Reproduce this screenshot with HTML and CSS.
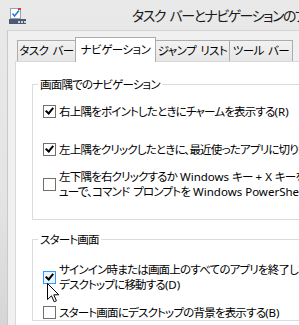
FILE: index.html
```html
<html>
<head>
  <title>タスク バーとナビゲーションのプロパティ</title>
  <link rel="stylesheet" href="styles.css">
</head>
<body>
  <div class="window">
    <div class="titlebar">
      <svg class="app-icon" width="17" height="16" viewBox="0 0 17 16">
        <rect x="1.5" y="0.5" width="10" height="10" fill="#ffffff" stroke="#9aa3ad"/>
        <rect x="9" y="0" width="3" height="2" fill="#d83b3b"/>
        <path d="M3.5 5.5 L5.5 8 L10 2.5" fill="none" stroke="#2a7fd4" stroke-width="1.6"/>
        <rect x="0" y="11" width="17" height="5" fill="#4b5a70"/>
        <rect x="9" y="13" width="2" height="2" fill="#c8d0da"/>
        <rect x="12" y="13" width="2" height="2" fill="#c8d0da"/>
        <rect x="15" y="13" width="2" height="2" fill="#c8d0da"/>
      </svg>
      <span class="title">タスク バーとナビゲーションのプロパティ</span>
    </div>

    <div class="client">
      <div class="tabs">
        <div class="tab tab-taskbar">タスク バー</div>
        <div class="tab tab-nav selected">ナビゲーション</div>
        <div class="tab tab-jump">ジャンプ リスト</div>
        <div class="tab tab-toolbar">ツール バー</div>
      </div>

      <div class="panel">
        <div class="group corners">
          <div class="group-title">画面隅でのナビゲーション</div>
          <div class="option opt-charms">
            <span class="check on"></span>
            <span class="label">右上隅をポイントしたときにチャームを表示する<span class="en">(R)</span></span>
          </div>
          <div class="option opt-switch">
            <span class="check on"></span>
            <span class="label">左上隅をクリックしたときに、最近使ったアプリに切り替える<span class="en">(T)</span></span>
          </div>
          <div class="option opt-powershell">
            <span class="check"></span>
            <span class="label">左下隅を右クリックするか<span class="en"> Windows </span>キー<span class="en"> + X </span>キーを押したときに表示されるメニ<br>ューで、コマンド プロンプトを<span class="en"> Windows PowerShell </span>に置き換える<span class="en">(C)</span></span>
          </div>
        </div>

        <div class="group start">
          <div class="group-title">スタート画面</div>
          <div class="option opt-desktop">
            <span class="check on focus"></span>
            <span class="label">サインイン時または画面上のすべてのアプリを終了したときに、スタート画面ではなく<br>デスクトップに移動する<span class="en">(D)</span></span>
          </div>
          <div class="option opt-background">
            <span class="check"></span>
            <span class="label">スタート画面にデスクトップの背景を表示する<span class="en">(B)</span></span>
          </div>
        </div>
      </div>
    </div>

    <svg class="cursor" width="13" height="20" viewBox="0 0 13 20">
      <path d="M0.5 0.5 L0.5 16.5 L4.5 12.8 L7.2 18.8 L9.4 17.8 L6.8 11.8 L11.8 11.8 Z" fill="#ffffff" stroke="#000000" stroke-width="1" stroke-linejoin="miter"/>
    </svg>
  </div>
</body>
</html>
```

FILE: styles.css
```css
body {
  margin: 0;
  padding: 0;
  width: 299px;
  height: 325px;
  overflow: hidden;
  background: #e8e8e8;
  font-family: "Noto Sans CJK JP", "Noto Sans", sans-serif;
  font-size: 11.5px;
  letter-spacing: -0.8px;
  word-spacing: 2px;
  font-feature-settings: "palt";
  color: #000000;
}

.en {
  font-family: "Noto Sans", "Noto Sans CJK JP", sans-serif;
  letter-spacing: 0;
  word-spacing: 0;
  white-space: pre;
}

.window {
  position: relative;
  width: 460px;
  height: 325px;
  background: linear-gradient(to bottom, #e9e9e9 0%, #e4e4e4 60%, #d6d6d6 100%);
}

/* title bar */
.titlebar {
  height: 30px;
  display: flex;
  align-items: center;
  padding-left: 9px;
}

.app-icon {
  margin-top: 1px;
}

.title {
  margin-left: 106px;
  font-size: 14px;
  letter-spacing: -1.5px;
  word-spacing: 3px;
  color: #1a1a1a;
  white-space: nowrap;
}

/* dialog area */
.client {
  margin-left: 7px;
  height: 295px;
  border-left: 1px solid #c9c9c9;
  border-top: 1px solid #d4d4d4;
  background: #f0f0f0;
  padding-left: 7px;
}

.tabs {
  display: flex;
  align-items: flex-end;
  height: 24px;
  padding-top: 6px;
  padding-left: 2px;
}

.tab {
  box-sizing: border-box;
  height: 21px;
  line-height: 19px;
  text-align: center;
  border: 1px solid #acacac;
  border-bottom: none;
  background: linear-gradient(to bottom, #f2f2f2, #e6e6e6);
  white-space: pre;
  margin-left: -1px;
  letter-spacing: -0.5px;
  word-spacing: 2px;
}

.tab-taskbar {
  width: 59px;
  margin-left: 0;
}

.tab-nav {
  width: 81px;
}

.tab-jump {
  width: 75px;
}

.tab-toolbar {
  width: 64px;
}

.tab.selected {
  position: relative;
  z-index: 1;
  height: 25px;
  line-height: 22px;
  margin-bottom: -1px;
  background: #ffffff;
}

.panel {
  position: relative;
  height: 300px;
  background: #ffffff;
  border-top: 1px solid #d9d9d9;
  border-left: 1px solid #d9d9d9;
  padding-left: 16px;
  padding-top: 22px;
}

/* group boxes */
.group {
  border: 1px solid #dcdcdc;
  padding-left: 10px;
}

.group.corners {
  padding-bottom: 20px;
}

.group.start {
  margin-top: 19px;
}

.group-title {
  width: fit-content;
  line-height: 15px;
  margin: -8px 0 0 -5px;
  padding: 0 2px;
  background: #ffffff;
  white-space: nowrap;
}

/* check boxes */
.option {
  display: flex;
  align-items: center;
  min-height: 15px;
}

.label {
  margin-left: 3px;
  line-height: 15px;
  white-space: nowrap;
}

.check {
  flex: none;
  box-sizing: border-box;
  width: 13px;
  height: 13px;
  border: 1px solid #707070;
  background: #ffffff;
  position: relative;
}

.check.on::after {
  content: "";
  position: absolute;
  left: 3px;
  top: 0px;
  width: 3px;
  height: 6px;
  border-right: 2px solid #000000;
  border-bottom: 2px solid #000000;
  transform: rotate(40deg);
}

.check.focus {
  border-color: #3399ff;
  background: #eaf4fc;
}

.opt-charms {
  margin-top: 12px;
}

.opt-switch {
  margin-top: 23px;
}

.opt-powershell {
  margin-top: 12px;
}

.opt-desktop {
  margin-top: 15px;
}

.opt-background {
  margin-top: 13px;
}

.cursor {
  position: absolute;
  left: 47px;
  top: 283px;
  z-index: 5;
}
```
